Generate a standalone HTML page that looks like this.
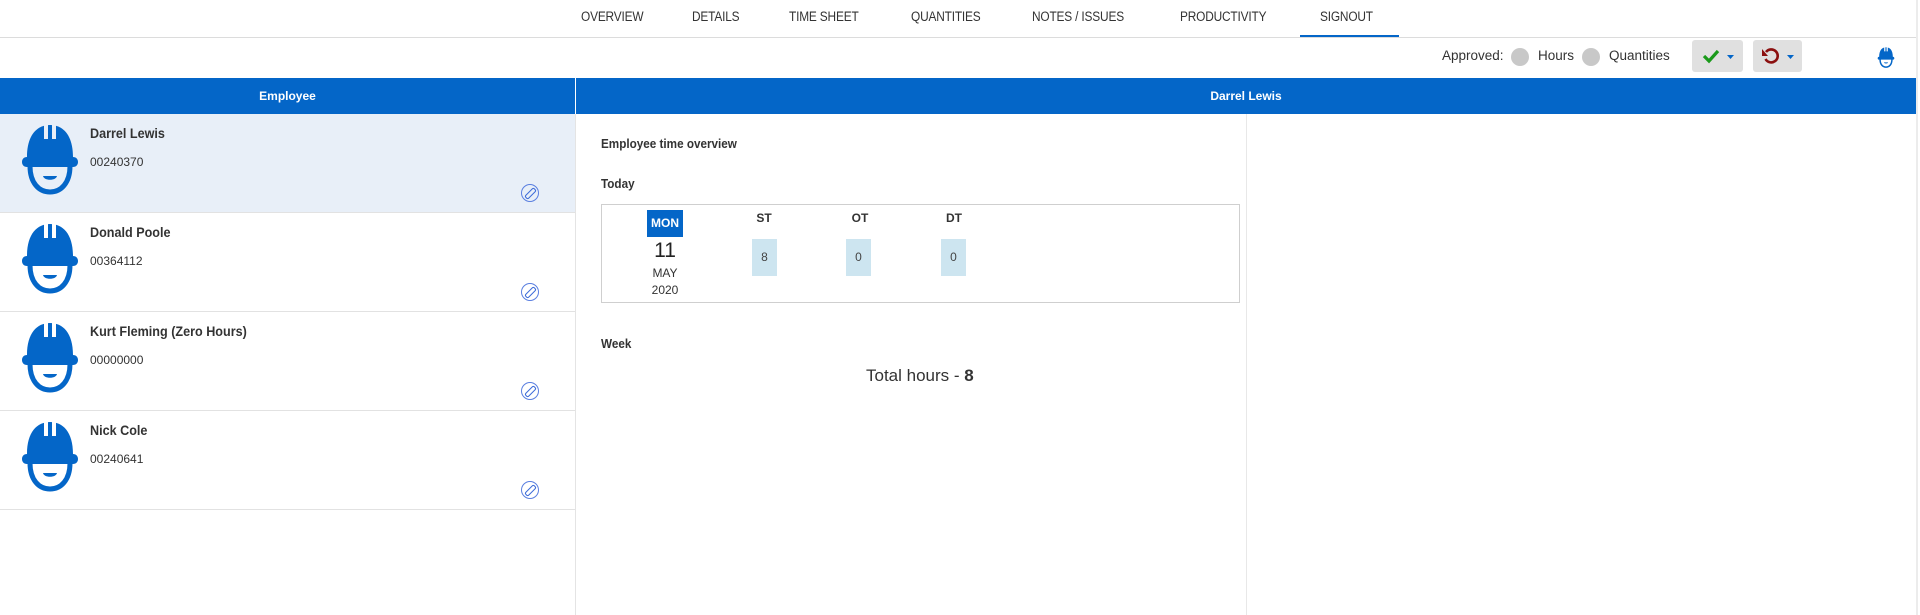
<!DOCTYPE html>
<html><head><meta charset="utf-8"><style>
*{margin:0;padding:0;box-sizing:border-box}
body{width:1920px;height:615px;overflow:hidden;background:#fff;font-family:"Liberation Sans",Arial,sans-serif;color:#333;position:relative}
.a{position:absolute;white-space:nowrap}
.tab{top:9px;font-size:13.5px;color:#333;letter-spacing:-0.2px;transform:scaleX(.88);transform-origin:left}
.nm{font-size:14px;font-weight:bold;color:#333;transform:scaleX(.9);transform-origin:left}
.num{font-size:12px;color:#333}
.row{position:absolute;left:0;width:575px;height:99px;border-bottom:1px solid #e2e2e2}
.edit{position:absolute;left:521px;width:18px;height:18px;border:1.5px solid #5a7fe0;border-radius:50%}
.edit:after{content:"";position:absolute;left:6px;top:2px;width:3px;height:11px;border:1.5px solid #3b6ad8;border-radius:2px;transform:rotate(45deg)}
.vb{position:absolute;top:239px;width:25px;height:37px;background:#cde5f0;font-size:12px;text-align:center;line-height:37px;color:#444}
.lbl{position:absolute;top:211px;font-size:12px;font-weight:bold;color:#333;width:40px;text-align:center}
</style></head><body>
<div class="a tab" style="left:581px">OVERVIEW</div>
<div class="a tab" style="left:692px">DETAILS</div>
<div class="a tab" style="left:789px">TIME SHEET</div>
<div class="a tab" style="left:911px">QUANTITIES</div>
<div class="a tab" style="left:1032px">NOTES / ISSUES</div>
<div class="a tab" style="left:1180px">PRODUCTIVITY</div>
<div class="a tab" style="left:1320px">SIGNOUT</div>
<div class="a" style="left:0;top:37px;width:1916px;height:1px;background:#dcdcdc"></div>
<div class="a" style="left:1300px;top:35px;width:99px;height:2px;background:#0466c8"></div>
<div class="a" style="left:1916px;top:0;width:2px;height:615px;background:#ececec"></div>
<div class="a" style="left:1442px;top:48px;font-size:13.5px;color:#333">Approved:</div>
<div class="a" style="left:1511px;top:48px;width:18px;height:18px;border-radius:50%;background:#c8c8c8"></div>
<div class="a" style="left:1538px;top:48px;font-size:13.5px;color:#333">Hours</div>
<div class="a" style="left:1582px;top:48px;width:18px;height:18px;border-radius:50%;background:#c8c8c8"></div>
<div class="a" style="left:1609px;top:48px;font-size:13.5px;color:#333">Quantities</div>
<div class="a" style="left:1692px;top:40px;width:51px;height:32px;background:#e0e0e0;border-radius:3px">
<svg width="51" height="32"><path d="M12 16 l5 5 l9 -10" fill="none" stroke="#1a9a1a" stroke-width="3.2"/><path d="M35 15 h7 l-3.5 4z" fill="#0466c8"/></svg></div>
<div class="a" style="left:1753px;top:40px;width:49px;height:32px;background:#e0e0e0;border-radius:3px">
<svg width="49" height="32"><path d="M13 12 A6.5 6.5 0 1 1 12.5 19" fill="none" stroke="#8b1010" stroke-width="2.6"/><path d="M9 9 v7 h6z" fill="#8b1010"/><path d="M34 15 h7 l-3.5 4z" fill="#0466c8"/></svg></div>
<svg width="0" height="0" style="position:absolute"><defs><g id="h"><path d="M6 36 C6 14 16 4 29 4 C42 4 52 14 52 36 C55 36 57 38 57 41 C57 44 55 46 52 46 L6 46 C3 46 1 44 1 41 C1 38 3 36 6 36Z" fill="#0466c8"/><rect x="23" y="2" width="4" height="16" fill="currentColor"/><rect x="31" y="2" width="4" height="16" fill="currentColor"/><path d="M9 45 C9 62 18 71 29 71 C40 71 49 62 49 45" fill="none" stroke="#0466c8" stroke-width="5"/><path d="M22 55 h14 C35 60 23 60 22 55Z" fill="#0466c8"/></g></defs></svg>
<svg class="a" style="left:1875px;top:46px;color:#fff" width="22" height="22" viewBox="0 0 58 74"><use href="#h"/></svg>
<div class="a" style="left:0;top:78px;width:1916px;height:36px;background:#0466c8"></div>
<div class="a" style="left:575px;top:78px;width:1px;height:36px;background:#fff"></div>
<div class="a" style="left:0;top:89px;width:575px;text-align:center;color:#fff;font-size:12px;font-weight:bold">Employee</div>
<div class="a" style="left:576px;top:89px;width:1340px;text-align:center;color:#fff;font-size:12px;font-weight:bold">Darrel Lewis</div>
<div class="a" style="left:575px;top:114px;width:1px;height:501px;background:#e4e4e4"></div>
<div class="a" style="left:1246px;top:114px;width:1px;height:501px;background:#e8e8e8"></div>
<div class="row" style="top:114px;background:#e8eff8"></div>
<div class="row" style="top:213px"></div>
<div class="row" style="top:312px"></div>
<div class="row" style="top:411px"></div>
<svg class="a" style="left:21px;top:121px;color:#e8eff8" width="58" height="74" viewBox="0 0 58 74"><use href="#h"/></svg>
<svg class="a" style="left:21px;top:220px;color:#fff" width="58" height="74" viewBox="0 0 58 74"><use href="#h"/></svg>
<svg class="a" style="left:21px;top:319px;color:#fff" width="58" height="74" viewBox="0 0 58 74"><use href="#h"/></svg>
<svg class="a" style="left:21px;top:418px;color:#fff" width="58" height="74" viewBox="0 0 58 74"><use href="#h"/></svg>
<div class="a nm" style="left:90px;top:125px">Darrel Lewis</div>
<div class="a num" style="left:90px;top:155px">00240370</div>
<div class="a nm" style="left:90px;top:224px">Donald Poole</div>
<div class="a num" style="left:90px;top:254px">00364112</div>
<div class="a nm" style="left:90px;top:323px">Kurt Fleming (Zero Hours)</div>
<div class="a num" style="left:90px;top:353px">00000000</div>
<div class="a nm" style="left:90px;top:422px">Nick Cole</div>
<div class="a num" style="left:90px;top:452px">00240641</div>
<div class="edit" style="top:184px"></div>
<div class="edit" style="top:283px"></div>
<div class="edit" style="top:382px"></div>
<div class="edit" style="top:481px"></div>
<div class="a nm" style="left:601px;top:136px;font-size:13px">Employee time overview</div>
<div class="a nm" style="left:601px;top:176px;font-size:13px">Today</div>
<div class="a" style="left:601px;top:204px;width:639px;height:99px;border:1px solid #cfcfcf"></div>
<div class="a" style="left:647px;top:210px;width:36px;height:27px;background:#0466c8;color:#fff;font-size:12px;font-weight:bold;text-align:center;line-height:27px">MON</div>
<div class="a" style="left:647px;top:239px;width:36px;text-align:center;font-size:21px;color:#222">11</div>
<div class="a" style="left:647px;top:266px;width:36px;text-align:center;font-size:12px">MAY</div>
<div class="a" style="left:647px;top:283px;width:36px;text-align:center;font-size:12px">2020</div>
<div class="lbl" style="left:744px">ST</div>
<div class="lbl" style="left:840px">OT</div>
<div class="lbl" style="left:934px">DT</div>
<div class="vb" style="left:752px">8</div>
<div class="vb" style="left:846px">0</div>
<div class="vb" style="left:941px">0</div>
<div class="a nm" style="left:601px;top:336px;font-size:13px">Week</div>
<div class="a" style="left:866px;top:366px;font-size:17px;color:#333">Total hours - <b>8</b></div>
</body></html>
